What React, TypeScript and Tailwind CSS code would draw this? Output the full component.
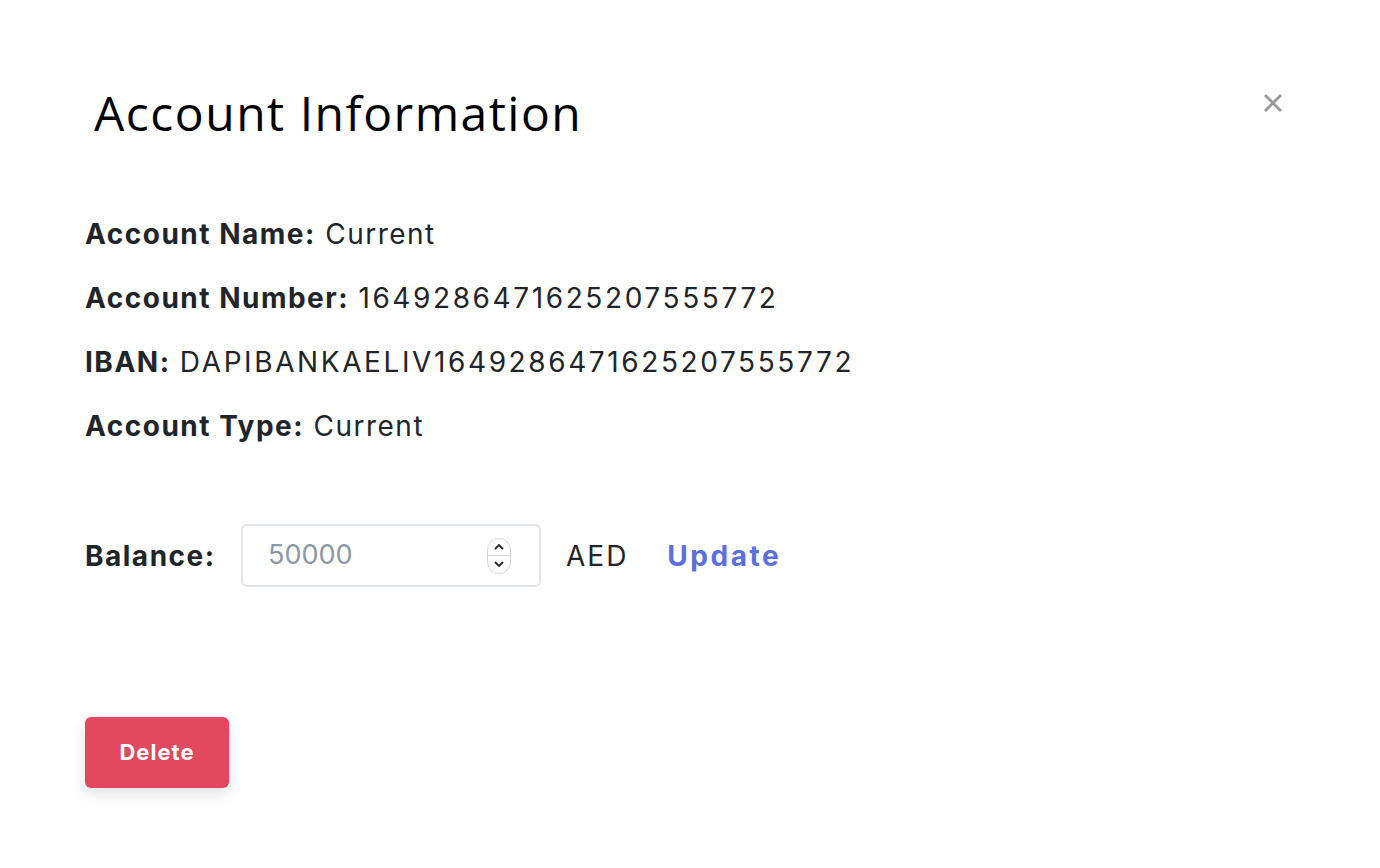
import { useState } from "react";

function Row({ label, value, numeric }: { label: string; value: string; numeric?: boolean }) {
  return (
    <p className="text-[28px] leading-[40px] tracking-[1.5px] text-[#212529]">
      <span className="font-bold">{label}</span>{" "}
      <span className={numeric ? "tracking-[2.6px]" : ""}>{value}</span>
    </p>
  );
}

export default function App() {
  const [balance, setBalance] = useState("");

  return (
    <div className="min-h-screen bg-white font-['Inter','Open_Sans',sans-serif]">
      <div className="px-[85px] pt-[79px]">
        {/* Header */}
        <div className="flex items-start justify-between">
          <h1 className="pl-[9px] font-['Open_Sans',sans-serif] text-[48px] font-normal leading-[68px] tracking-[1.5px] text-black">
            Account Information
          </h1>
          <button
            type="button"
            className="mr-[7px] mt-[9px] flex h-[30px] w-[30px] items-center justify-center text-[#999]"
          >
            <svg width="20" height="20" viewBox="0 0 20 20" stroke="currentColor" strokeWidth="2.8">
              <path d="M2 2 L18 18 M18 2 L2 18" />
            </svg>
          </button>
        </div>

        {/* Details */}
        <div className="mt-[67px] flex flex-col gap-[24px]">
          <Row label="Account Name:" value="Current" />
          <Row label="Account Number:" value="1649286471625207555772" numeric />
          <Row label="IBAN:" value="DAPIBANKAELIV1649286471625207555772" numeric />
          <Row label="Account Type:" value="Current" />
        </div>

        {/* Balance */}
        <div className="mt-[78px] flex items-center">
          <span className="w-[156px] text-[28px] font-bold tracking-[1.5px] text-[#212529]">Balance:</span>
          <div className="flex h-[63px] w-[300px] items-center rounded-[6px] border-2 border-[#e2e5e8] pl-[25px] pr-[28px]">
            <input
              value={balance}
              onChange={(e) => setBalance(e.target.value)}
              placeholder="50000"
              className="min-w-0 flex-1 bg-transparent text-[27px] text-[#212529] outline-none placeholder:text-[#8a97a6]"
            />
            <div className="flex h-[36px] w-[24px] flex-col overflow-hidden rounded-full border border-[#d5d5d5] text-[#222]">
              <div className="flex flex-1 items-center justify-center border-b border-[#d5d5d5]">
                <svg width="10" height="7" viewBox="0 0 10 7" fill="none" stroke="currentColor" strokeWidth="1.8">
                  <path d="M1 6 L5 2 L9 6" />
                </svg>
              </div>
              <div className="flex flex-1 items-center justify-center">
                <svg width="10" height="7" viewBox="0 0 10 7" fill="none" stroke="currentColor" strokeWidth="1.8">
                  <path d="M1 1 L5 5 L9 1" />
                </svg>
              </div>
            </div>
          </div>
          <span className="ml-[25px] text-[28px] tracking-[2px] text-[#212529]">AED</span>
          <button type="button" className="ml-[39px] text-[28px] font-bold tracking-[2.5px] text-[#5a6fe0]">
            Update
          </button>
        </div>

        {/* Actions */}
        <div className="mt-[130px]">
          <button
            type="button"
            className="h-[71px] w-[144px] rounded-[6px] bg-[#e2485f] text-[22px] font-bold tracking-[1px] text-white shadow-[0_6px_14px_rgba(0,0,0,0.12)]"
          >
            Delete
          </button>
        </div>
      </div>
    </div>
  );
}
